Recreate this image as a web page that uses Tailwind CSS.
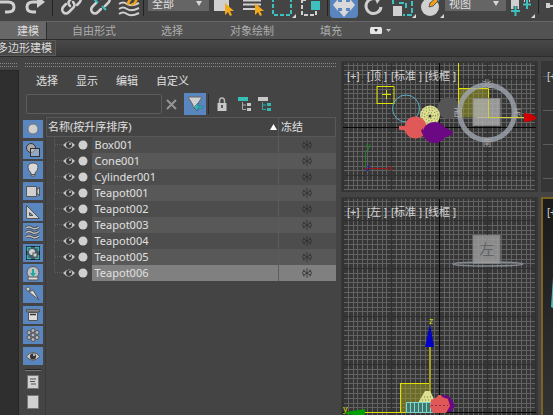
<!DOCTYPE html>
<html lang="zh-CN">
<head>
  <meta charset="UTF-8" />
  <meta name="viewport" content="width=device-width, initial-scale=1.0" />
  <title>场景资源管理器</title>
  <script src="https://cdn.jsdelivr.net/npm/@tailwindcss/browser@4"></script>
</head>
<body class="flex flex-col h-screen overflow-hidden bg-[#444444] text-[#e0e0e0] text-[11px] leading-4 font-['Noto_Sans','Noto_Sans_CJK_SC',sans-serif]">

  <!-- shared icons -->
  <svg class="absolute w-0 h-0">
    <symbol id="eye" viewBox="0 0 14 10">
      <path d="M1 5Q7 -2 13 5Q7 12 1 5Z" fill="#c4c4c4" />
      <circle cx="7" cy="5" r="3" fill="#3a3a3a" />
      <circle cx="8" cy="4" r="1" fill="#c4c4c4" />
    </symbol>
    <symbol id="flake" viewBox="0 0 12 12">
      <path d="M6 1V11M2 3.500L10 8.500M10 3.500L2 8.500M1 5.500L3 4.500V2.500M11 5.500L9 4.500V2.500M1 6.500L3 7.500V9.500M11 6.500L9 7.500V9.500" fill="none" stroke="#303030" stroke-width=".8" />
    </symbol>
    <pattern id="grid" width="48" height="48" patternUnits="userSpaceOnUse">
      <path d="M5.500 0V48M10.500 0V48M14.500 0V48M19.500 0V48M24.500 0V48M29.500 0V48M34.500 0V48M39.500 0V48M43.500 0V48" stroke="#626262" />
      <path d="M0 5.500H48M0 10.500H48M0 14.500H48M0 19.500H48M0 24.500H48M0 29.500H48M0 34.500H48M0 39.500H48M0 43.500H48" stroke="#626262" />
      <path d="M.5 0V48M0 .5H48" stroke="#303030" />
    </pattern>
  </svg>

  <!-- main toolbar, scrolled so that only its lower half shows -->
  <header class="flex flex-col justify-end h-[21px] shrink-0 overflow-hidden">
    <div class="flex items-center h-[38px] shrink-0">
      <button aria-label="撤消" class="w-5 h-8 shrink-0"><svg class="w-5 h-8" viewBox="0 0 20 32"><path d="M0 16H8Q14 16 14 21Q14 26 8 26H5" fill="none" stroke="#d0d0d0" stroke-width="3" /></svg></button>
      <button aria-label="重做" class="w-8 h-8 shrink-0"><svg class="w-8 h-8" viewBox="0 0 32 32"><path d="M19 16H13Q7 16 7 21Q7 26 13 26H16" fill="none" stroke="#d0d0d0" stroke-width="3" /><path d="M17 10L25 16L17 22Z" fill="#d0d0d0" /></svg></button>
      <span class="w-px h-7 bg-[#222] shrink-0"></span>
      <button aria-label="链接" class="w-8 h-8 ml-0.5 shrink-0"><svg class="w-8 h-8" viewBox="0 0 32 32"><g fill="none" stroke="#d0d0d0" stroke-width="2.500" stroke-linecap="round"><path d="M15 20Q12 17 15 14L19 10Q22 8 25 11Q27 14 24 17L22 19" /><path d="M18 16Q21 19 18 22L14 26Q11 29 8 26Q6 23 9 20L11 18" /></g></svg></button>
      <button aria-label="取消链接" class="w-7 h-8 shrink-0"><svg class="w-7 h-8" viewBox="0 0 28 32"><g fill="none" stroke="#d0d0d0" stroke-width="2.500" stroke-linecap="round"><path d="M14 13L17 10Q20 8 22 11Q24 14 21 17L18 20" /><path d="M14 23L11 26Q8 29 5 26Q3 23 6 20L9 17" /></g><path d="M7 13L11 17M15 20L19 24" stroke="#3cc0c0" stroke-width="2" /></svg></button>
      <button aria-label="绑定到空间扭曲" class="w-7 h-8 shrink-0"><svg class="w-7 h-8" viewBox="0 0 28 32"><path d="M4 18Q8 15 12 18T24 17M4 23Q8 20 12 23T24 22M4 28Q8 25 12 28T24 27" fill="none" stroke="#d0d0d0" stroke-width="2" /><path d="M14 19Q12 17 15 14L18 11M16 19L20 17L22 12" fill="none" stroke="#f0a818" stroke-width="2.500" /></svg></button>
      <span class="w-px h-7 bg-[#222] shrink-0"></span>
      <div class="relative ml-1 shrink-0">
        <select aria-label="选择过滤器" class="block appearance-none w-[61px] h-[18px] pt-1 pl-1 bg-[#656565] text-[#e0e0e0] leading-3"><option>全部</option></select>
        <svg class="absolute right-1.5 top-[7px] w-2 h-2 pointer-events-none" viewBox="0 0 8 8"><path d="M1 1H7L4 6Z" fill="#d8d8d8" /></svg>
      </div>
      <button aria-label="选择对象" class="w-[30px] h-8 shrink-0"><svg class="w-[30px] h-8" viewBox="0 0 30 32"><path d="M5 5H20V25H5Z" fill="#d0d0d0" /><path d="M16 17L25 25L21 25L23 29L21 30L19 26L16 29Z" fill="#f5aa1c" /></svg></button>
      <button aria-label="按名称选择" class="w-7 h-8 shrink-0"><svg class="w-7 h-8" viewBox="0 0 28 32"><path d="M5 10H19M4 14.500H22M4 18.500H22M4 23H16" stroke="#d0d0d0" stroke-width="2" /><path d="M16 17L25 25L21 25L23 29L21 30L19 26L16 29Z" fill="#f5aa1c" /></svg></button>
      <button aria-label="矩形选择区域" class="w-[30px] h-8 shrink-0"><svg class="w-[30px] h-8" viewBox="0 0 30 32"><path d="M6 6V29H24V6" fill="none" stroke="#3cc0c0" stroke-width="2" stroke-dasharray="4 2" /><path d="M29 28V32H25Z" fill="#d8d8d8" /></svg></button>
      <button aria-label="窗口/交叉" class="w-7 h-8 shrink-0"><svg class="w-7 h-8" viewBox="0 0 28 32"><path d="M5 7V29H19V25M5 14H11" fill="none" stroke="#d0d0d0" stroke-width="2" stroke-dasharray="4 2" /><path d="M14 15H23V24H14Z" fill="#3cc0c0" /></svg></button>
      <span class="w-px h-7 mx-0.5 bg-[#222] shrink-0"></span>
      <button aria-label="选择并移动" class="w-7 h-8 shrink-0 rounded-sm bg-[#5a86c0]"><svg class="w-7 h-8" viewBox="0 0 28 32"><path d="M14 7L19 12H16V16H20V13L25 19L20 25V22H16V25H19L14 31L9 25H12V22H8V25L3 19L8 13V16H12V12H9Z" fill="#d8d8d8" /></svg></button>
      <button aria-label="选择并旋转" class="w-7 h-8 ml-px shrink-0"><svg class="w-7 h-8" viewBox="0 0 28 32"><path d="M19 14A7.500 7.500 0 1 0 22 21" fill="none" stroke="#d0d0d0" stroke-width="3" /><path d="M15 9L23 11L18 18Z" fill="#d0d0d0" /></svg></button>
      <button aria-label="选择并均匀缩放" class="w-[30px] h-8 shrink-0"><svg class="w-[30px] h-8" viewBox="0 0 30 32"><path d="M6 18V12H25V29H16M12 17H19V24" fill="none" stroke="#3cc0c0" stroke-width="2" stroke-dasharray="5 2" /><path d="M6 20H15V30H6Z" fill="#d0d0d0" /><path d="M29 28V32H25Z" fill="#d8d8d8" /></svg></button>
      <button aria-label="选择并放置" class="w-7 h-8 shrink-0"><svg class="w-7 h-8" viewBox="0 0 28 32"><circle cx="13" cy="21" r="9" fill="#d0d0d0" /><path d="M18 10H24L22 15L17 18Z" fill="#3cc0c0" /><path d="M12 21L13 17L19 12L21 15L16 20Z" fill="#f5a018" stroke="#555" /><path d="M27 28V32H23Z" fill="#d8d8d8" /></svg></button>
      <div class="relative shrink-0">
        <select aria-label="参考坐标系" class="block appearance-none w-[61px] h-[18px] pt-1 pl-1 bg-[#656565] text-[#e0e0e0] leading-3"><option>视图</option></select>
        <svg class="absolute right-1.5 top-[7px] w-2 h-2 pointer-events-none" viewBox="0 0 8 8"><path d="M1 1H7L4 6Z" fill="#d8d8d8" /></svg>
      </div>
      <button aria-label="使用轴点中心" class="w-[30px] h-8 shrink-0"><svg class="w-[30px] h-8" viewBox="0 0 30 32"><path d="M5 8H13V25H5ZM18 8H24V16H18Z" fill="#d0d0d0" /><path d="M9.500 20V30M5 25H14M21 14V23M17 18.500H25" stroke="#444" stroke-width="4" /><path d="M9.500 20V30M5 25H14M21 14V23M17 18.500H25" stroke="#3cc0c0" stroke-width="2" /><path d="M29 28V32H25Z" fill="#d8d8d8" /></svg></button>
      <span class="w-px h-6 ml-0.5 bg-[#222] shrink-0"></span>
      <button aria-label="选择并操纵" class="w-4 h-8 shrink-0"><svg class="w-4 h-8" viewBox="0 0 16 32"><path d="M7 17H11V22H7ZM11 19H16V21H11Z" fill="#d0d0d0" /></svg></button>
    </div>
  </header>

  <!-- ribbon -->
  <nav class="flex items-center h-[19px] shrink-0 border-t border-[#666] border-b border-b-[#2c2c2c] bg-[#525252] text-[#adadad]">
    <a href="#" class="flex items-center h-full w-[47px] pl-[17px] border-r border-[#2e2e2e] bg-[#686868] text-[#dadada]">建模</a>
    <a href="#" class="w-[89px] pl-[25px]">自由形式</a>
    <a href="#" class="w-[69px] pl-[25px]">选择</a>
    <a href="#" class="w-[90px] pl-[25px]">对象绘制</a>
    <a href="#" class="w-[75px] pl-[25px]">填充</a>
    <button aria-label="最小化功能区" class="flex items-center gap-1">
      <svg class="w-3 h-2" viewBox="0 0 12 8"><rect width="12" height="7" rx="1.500" fill="#e6e6e6" /><path d="M4 2H8L6 5Z" fill="#333" /></svg>
      <svg class="w-[5px] h-1" viewBox="0 0 5 4"><path d="M0 0H5L2.500 3Z" fill="#c8c8c8" /></svg>
    </button>
  </nav>
  <div class="flex h-[17px] shrink-0 border-b border-[#2c2c2c] bg-linear-to-b from-[#484848] to-[#393939]">
    <button class="w-14 border border-l-0 border-[#5a5a5a] bg-[#494949] text-[#dadada] leading-[14px] text-left whitespace-nowrap overflow-hidden -indent-[3px]">多边形建模</button>
  </div>

  <main class="flex flex-1 min-h-0">
    <!-- docked strip -->
    <div class="flex flex-col w-[19px] shrink-0">
      <div class="h-1 mt-1.5 mr-0.5 border-y border-dotted border-[#8a8a8a]"></div>
      <div class="flex-1 mt-[3px] border-t border-r border-[#262626] bg-[#2f2f2f]"></div>
    </div>

    <!-- scene explorer -->
    <section class="flex flex-col flex-1 min-w-0 pl-1 pr-[5px]">
      <div class="h-1 mt-1.5 ml-0.5 shrink-0 border-y border-dotted border-[#8a8a8a]"></div>
      <nav class="flex gap-[18px] h-5 mt-1 pl-[13px] items-center shrink-0">
        <a href="#">选择</a>
        <a href="#">显示</a>
        <a href="#">编辑</a>
        <a href="#">自定义</a>
      </nav>
      <div class="flex items-center h-[26px] pl-[3px] shrink-0">
        <input type="text" aria-label="查找" class="w-[136px] h-5 px-1 border border-[#5c5c5c] rounded-xs bg-[#414141]" />
        <button aria-label="清除" class="w-[22px] h-5 pr-1 flex justify-center items-center"><svg class="w-[11px] h-[11px]" viewBox="0 0 11 11"><path d="M1 1L10 10M10 1L1 10" stroke="#959595" stroke-width="2" /></svg></button>
        <button aria-label="过滤器" class="w-[22px] h-[22px] bg-[#5a86c0]"><svg class="w-[22px] h-[22px]" viewBox="0 0 22 22"><path d="M4 4H18L13 12V18L9 14V12Z" fill="#d0d0d0" stroke="#666" /><path d="M10 14L14 10V13H19V15H14V18Z" fill="#2cb8b8" stroke="#2c5c6c" stroke-width=".5" /></svg></button>
        <span class="w-px h-5 ml-0.5 bg-[#2c2c2c]"></span>
        <button aria-label="锁定" class="w-[26px] h-5 flex justify-center items-center"><svg class="w-2.5 h-3.5" viewBox="0 0 10 14"><path d="M2.500 7V4Q2.500 1 5 1Q7.500 1 7.500 4V7" fill="none" stroke="#b8b8b8" stroke-width="1.500" /><rect x=".5" y="6" width="9" height="8" fill="#c8c8c8" /><path d="M5 8V11" stroke="#333" stroke-width="1.500" /></svg></button>
        <button aria-label="层次" class="w-[19px] h-5 flex justify-center items-center"><svg class="w-3.5 h-3.5" viewBox="0 0 14 14"><path d="M0 0H10V4H0Z" fill="#36c0b8" /><path d="M4.500 5V12.500H8M4.500 8H8" fill="none" stroke="#aaa" /><path d="M9 6H13V9H9ZM9 11H13V14H9Z" fill="#c8c8c8" /></svg></button>
        <button aria-label="层" class="w-[22px] h-5 flex justify-center items-center"><svg class="w-3.5 h-3.5" viewBox="0 0 14 14"><path d="M0 0H10V4H0Z" fill="#c8c8c8" /><path d="M4.500 5V12.500H8M4.500 8H8" fill="none" stroke="#36a8a8" /><path d="M9 6H13V9H9ZM9 11H13V14H9Z" fill="#36b8b0" /></svg></button>
      </div>

      <div class="flex flex-1 min-h-0 gap-0.5">
        <!-- display filters -->
        <div class="flex flex-col w-5 shrink-0 pt-[3px]">
          <div class="flex flex-col justify-between h-[245px] shrink-0">
            <button aria-label="几何体" class="h-[18px] bg-[#5a86c0]"><svg class="w-5 h-[18px]" viewBox="0 0 20 18"><circle cx="10" cy="9" r="5" fill="#d0d0d0" stroke="#777" /></svg></button>
            <button aria-label="图形" class="h-[18px] bg-[#5a86c0]"><svg class="w-5 h-[18px]" viewBox="0 0 20 18"><circle cx="8" cy="7" r="4.500" fill="#aaa" stroke="#333" /><rect x="7.500" y="7.500" width="9" height="8" fill="#ccc" fill-opacity=".5" stroke="#333" /></svg></button>
            <button aria-label="灯光" class="h-[18px] bg-[#5a86c0]"><svg class="w-5 h-[18px]" viewBox="0 0 20 18"><path d="M8 12Q5 9 5 6.500Q5 2 10 2Q15 2 15 6.500Q15 9 12 12V15H8Z" fill="#d8d8d8" stroke="#555" /><path d="M8 13.500H12" stroke="#555" /></svg></button>
            <button aria-label="摄影机" class="h-[18px] bg-[#5a86c0]"><svg class="w-5 h-[18px]" viewBox="0 0 20 18"><path d="M3.500 4.500H13.500V14.500H3.500Z" fill="#d0d0d0" stroke="#555" /><path d="M14 8L16.500 5V14L14 11Z" fill="#d0d0d0" stroke="#555" /></svg></button>
            <button aria-label="辅助对象" class="h-[18px] bg-[#5a86c0]"><svg class="w-5 h-[18px]" viewBox="0 0 20 18"><path d="M3.500 2.500V15.500H16.500ZM6.500 9.500L10 12.500H6.500Z" fill="#d0d0d0" fill-rule="evenodd" stroke="#555" /></svg></button>
            <button aria-label="空间扭曲" class="h-[18px] bg-[#5a86c0]"><svg class="w-5 h-[18px]" viewBox="0 0 20 18"><g fill="none"><path d="M3 5Q6 3 9 5T16 4M3 9.500Q6 7.500 9 9.500T16 8.500M3 14Q6 12 9 14T16 13" stroke="#444" stroke-width="3" /><path d="M3 5Q6 3 9 5T16 4M3 9.500Q6 7.500 9 9.500T16 8.500M3 14Q6 12 9 14T16 13" stroke="#c0c0c0" stroke-width="1.500" /></g></svg></button>
            <button aria-label="组" class="h-[18px] bg-[#5a86c0]"><svg class="w-5 h-[18px]" viewBox="0 0 20 18"><rect x="3.500" y="2.500" width="13" height="13" fill="#3f5f6c" stroke="#223" /><path d="M4.500 7V3.500H8M12 3.500H15.500V7M15.500 11V14.500H12M8 14.500H4.500V11" fill="none" stroke="#35b8b0" stroke-width="1.500" /><circle cx="9" cy="8" r="3" fill="#d0d0d0" /><rect x="10" y="9" width="4" height="4" fill="#d0d0d0" stroke="#555" /></svg></button>
            <button aria-label="外部参照" class="h-[18px] bg-[#5a86c0]"><svg class="w-5 h-[18px]" viewBox="0 0 20 18"><circle cx="10" cy="8.500" r="6" fill="#c0c0c0" stroke="#555" /><path d="M5 13H15V16H5Z" fill="#ddd" stroke="#555" /><path d="M9 5H11V9H13L10 13L7 9H9Z" fill="#1fa8a0" /></svg></button>
            <button aria-label="骨骼" class="h-[18px] bg-[#5a86c0]"><svg class="w-5 h-[18px]" viewBox="0 0 20 18"><path d="M6 7L10 5L16 15Z" fill="#d8d8d8" stroke="#555" /><circle cx="5" cy="4" r="2" fill="#d8d8d8" stroke="#555" /></svg></button>
            <button aria-label="容器" class="h-[18px] bg-[#5a86c0]"><svg class="w-5 h-[18px]" viewBox="0 0 20 18"><path d="M5.500 6.500H14.500V14.500H5.500Z" fill="#ddd" stroke="#555" /><path d="M3.500 3.500H16.500V6H3.500Z" fill="#888" stroke="#555" /><path d="M7 8.500H13" stroke="#333" stroke-width="1.500" /></svg></button>
            <button aria-label="冻结对象" class="h-[18px] bg-[#5a86c0]"><svg class="w-5 h-[18px]" viewBox="0 0 20 18"><g fill="#b8b8b8" stroke="#555"><circle cx="10" cy="4.500" r="2" /><circle cx="10" cy="13.500" r="2" /><circle cx="6" cy="6.500" r="2" /><circle cx="14" cy="6.500" r="2" /><circle cx="6" cy="11.500" r="2" /><circle cx="14" cy="11.500" r="2" /><circle cx="10" cy="9" r="2" /></g></svg></button>
            <button aria-label="隐藏对象" class="h-[18px] bg-[#5a86c0]"><svg class="w-5 h-[18px]" viewBox="0 0 20 18"><path d="M3 9.500Q10 1.500 17 9.500Q10 17 3 9.500Z" fill="#c4c4c4" stroke="#555" /><circle cx="10" cy="9.500" r="3" fill="#333" /><circle cx="11" cy="8" r="1" fill="#ddd" /></svg></button>
          </div>
          <hr class="h-0.5 mt-1 mx-0.5 border-t border-b border-t-[#222] border-b-[#777] shrink-0" />
          <button aria-label="全部" class="h-[18px] shrink-0 flex justify-center items-end"><svg class="w-3 h-3.5" viewBox="0 0 12 14"><rect x=".5" y=".5" width="11" height="13" fill="#d0d0d0" stroke="#777" /><path d="M3 4H9M3 6.500H8M4 9H9" stroke="#555" /></svg></button>
          <button aria-label="无" class="h-5 shrink-0 flex justify-center items-end"><svg class="w-3 h-3.5" viewBox="0 0 12 14"><rect x=".5" y=".5" width="11" height="13" fill="#d0d0d0" stroke="#777" /></svg></button>
        </div>

        <div class="flex-1 min-w-0 border-l border-[#3a3a3a]">
          <table class="w-full table-fixed border-collapse text-left">
            <colgroup><col class="w-[45px]" /><col /><col class="w-[57px]" /></colgroup>
            <thead>
              <tr class="h-[19px] border border-[#585858]">
                <th colspan="2" class="p-0 pl-px font-normal">
                  <div class="flex justify-between items-center leading-4">名称(按升序排序)<svg class="w-[7px] h-1.5 mr-px" viewBox="0 0 7 6"><path d="M0 6L3.500 0L7 6Z" fill="#fff" /></svg></div>
                </th>
                <th class="p-0 pl-0.5 font-normal border-l border-[#585858]">冻结</th>
              </tr>
            </thead>
            <tbody id="rows"></tbody>
          </table>
        </div>
      </div>
    </section>

    <!-- viewports -->
    <div class="flex flex-col w-[197px] mt-1 shrink-0 gap-[5px]">
      <div class="relative h-[131px] shrink-0 border-2 border-[#363636] bg-[#363636]">
        <svg class="block w-full h-full" aria-label="顶视图">
          <g transform="translate(96 64)"><rect x="-96" y="-64" width="193" height="130" fill="url(#grid)" /><path d="M.5 -64V66M-96 .5H97" stroke="#080808" /></g>
          <rect x="34" y="23.500" width="17" height="17" fill="none" stroke="#e0e000" />
          <path d="M43.500 27V36M39 31.500H48" stroke="#e0e000" />
          <circle cx="63" cy="45.500" r="13.500" fill="none" stroke="#5cb0c8" />
          <circle cx="105.500" cy="45" r="11" fill="#555" /><path d="M98 38L93 46L100 52Z" fill="#555" />
          <path d="M115.500 25.500H145.500V54.500H115.500Z" fill="#a0a020" fill-opacity=".5" />
          <path d="M115.500 0V44M116 25.500H145.500V54.500M134 54.500H181" fill="none" stroke="#e0e000" />
          <path d="M181 50L188 51L193 54V56L188 58L181 59Z" fill="#d00000" />
          <circle cx="87" cy="52.500" r="10" fill="#dce090" />
          <g fill="none" stroke="#6c6c38" stroke-dasharray="1 2"><circle cx="87" cy="52.500" r="8" /><circle cx="87" cy="52.500" r="5.500" /><circle cx="87" cy="52.500" r="3" /></g>
          <circle cx="87" cy="53" r="1.500" fill="#333" />
          <circle cx="72.500" cy="64.500" r="11" fill="#e05858" /><path d="M56 63H63L66 70L60 67H56Z" fill="#e05858" />
          <ellipse cx="91.500" cy="69.500" rx="11.500" ry="10.500" fill="#6c0884" /><path d="M98 62L110 69V71L99 76ZM80 65L78 68L81 74Z" fill="#6c0884" />
          <circle cx="144" cy="49.500" r="27.500" fill="none" stroke="#a0a6b0" stroke-opacity=".8" stroke-width="5" />
          <rect x="130" y="35.500" width="27" height="27" fill="#b0b0b0" fill-opacity=".8" stroke="#888" />
          <path d="M145.500 37V54.500H181" fill="none" stroke="#d0d040" />
          <g fill="#a8a8a8" font-size="9" text-anchor="middle"><text x="144" y="24">北</text><text x="144" y="83">南</text><text x="115" y="53">西</text><text x="174" y="53">东</text></g>
          <path d="M22.500 105V87" stroke="#208020" /><path d="M22 105.500H45" stroke="#a01818" />
          <g font-size="9"><text x="23" y="86" fill="#208020">y</text><text x="45" y="108" fill="#a01818">x</text><text x="23" y="108" fill="#1818b0">z</text></g>
        </svg>
        <div class="absolute left-1 top-[5px] flex leading-4 text-[#d0d0d0] whitespace-nowrap font-['Liberation_Sans','Noto_Sans_CJK_SC',sans-serif]"><span class="w-5">[+]</span><span class="w-6">[顶 ]</span><span class="w-[34px]">[标准 ]</span><span>[线框 ]</span></div>
      </div>
      <div class="relative flex-1 min-h-0 border-2 border-b-0 border-[#363636] bg-[#363636]">
        <svg class="block w-full h-full" aria-label="左视图">
          <g transform="translate(96 213)"><rect x="-96" y="-213" width="193" height="1000" fill="url(#grid)" /><path d="M.5 -213V500M-96 .5H97" stroke="#080808" /></g>
          <ellipse cx="145" cy="65" rx="35" ry="2" fill="none" stroke="#858b94" stroke-width="1.500" />
          <rect x="130" y="36.500" width="27" height="28" fill="#a0a0a0" fill-opacity=".8" stroke="#808080" />
          <text x="144" y="56" font-size="15" text-anchor="middle" fill="#606468">左</text>
          <rect x="57.500" y="184.500" width="30" height="29" fill="#a0a020" fill-opacity=".5" stroke="#e0e000" />
          <path d="M87 148V213" stroke="#a8a020" stroke-width="2" />
          <path d="M87 125L91 148H82Z" fill="#0000c8" />
          <text x="86" y="125" font-size="9" fill="#d8d800">z</text>
          <path d="M82 192H87L93 204H75Z" fill="#dce090" /><path d="M81 198H90M79 201H92" stroke="#77773a" stroke-dasharray="1 2" />
          <path d="M63 204H91V214H63Z" fill="#407870" /><path d="M63.500 203.500H90.500V213.500H63.500ZM67.500 204V213M71.500 204V213M75.500 204V213M79.500 204V213M83.500 204V213M87.500 204V213" fill="none" stroke="#80d8c8" />
          <path d="M98 197L103 196L108 199L112 207L108 213H98Z" fill="#6c0884" />
          <path d="M88 201L94 198L95 196H98L99 198L105 200L107 207L103 214H90L87 208Z" fill="#e05858" />
          <path d="M88 206.500H105" stroke="#902848" stroke-dasharray="2 2" />
          <path d="M22 213.500H63" stroke="#e0e000" /><path d="M3 213L22 210V217L3 215Z" fill="#00a000" />
          <text x="0" y="213" font-size="9" fill="#d8d800">y</text>
        </svg>
        <div class="absolute left-1 top-[5px] flex leading-4 text-[#d0d0d0] whitespace-nowrap font-['Liberation_Sans','Noto_Sans_CJK_SC',sans-serif]"><span class="w-5">[+]</span><span class="w-6">[左 ]</span><span class="w-[34px]">[标准 ]</span><span>[线框 ]</span></div>
      </div>
    </div>
    <div class="flex flex-col w-3 ml-[3px] mt-1 shrink-0 gap-[5px] overflow-hidden text-[#d0d0d0] font-['Liberation_Sans',sans-serif]">
      <div class="relative h-[131px] shrink-0 border-2 border-r-0 border-[#363636] bg-[#363636]">
        <svg class="block w-full h-full" aria-label="前视图"><path d="M0 13.500H12M0 47.500H12M0 81.500H12M0 115.500H12" stroke="#5c5c5c" /></svg>
        <span class="absolute left-1 top-[5px]">[+]</span>
      </div>
      <div class="relative flex-1 min-h-0 border-2 border-r-0 border-b-0 border-[#7c6420] bg-linear-to-b from-[#1a1a1a] to-[#333]">
        <svg class="block w-full h-full" aria-label="透视图"><path d="M10 78L8 108L10 109Z" fill="#50b8c8" /></svg>
        <span class="absolute left-1 top-[5px]">[+]</span>
      </div>
    </div>
  </main>

  <script>
    const names = ['Box001', 'Cone001', 'Cylinder001', 'Teapot001', 'Teapot002', 'Teapot003', 'Teapot004', 'Teapot005', 'Teapot006'];
    const selected = 'Teapot006';

    document.getElementById('rows').innerHTML = names.map((name, i) => {
      let bg = i % 2 ? 'bg-[#585858]' : 'bg-[#4d4d4d]';
      if (name === selected) bg = 'bg-[#808080]';
      return `
        <tr class="h-4">
          <td class="p-0"><div class="flex items-center gap-0.5 h-4 pl-[7px]">
            <svg class="w-2 h-4" viewBox="0 0 8 16"><path d="M.5 0V${i === names.length - 1 ? 8 : 16}M1 7.500H8" stroke="#5c5c5c" stroke-dasharray="1 1" /></svg>
            <svg class="w-3.5 h-2.5 -ml-0.5"><use href="#eye" /></svg>
            <svg class="w-2.5 h-2.5" viewBox="0 0 10 10"><circle cx="5" cy="5" r="4.500" fill="#d0d0d0" /></svg>
          </div></td>
          <td class="p-0 pl-[3px] leading-4 ${bg}">${name}</td>
          <td class="p-0 border-l border-[#5c5c5c] ${bg}"><svg class="w-3 h-3 mx-auto"><use href="#flake" /></svg></td>
        </tr>`;
    }).join('');
  </script>

</body>
</html>
